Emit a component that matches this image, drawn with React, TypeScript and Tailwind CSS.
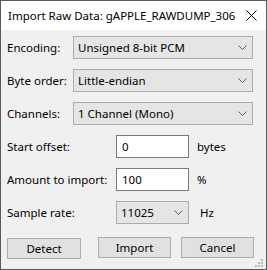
const font = { fontFamily: '"Noto Sans", "Liberation Sans", sans-serif' };

function Chevron() {
  return (
    <svg width="9" height="5" viewBox="0 0 9 5" className="shrink-0">
      <path d="M0.5 0.5 L4.5 4.5 L8.5 0.5" fill="none" stroke="#606060" strokeWidth="1" />
    </svg>
  );
}

function Combo({ value, width }: { value: string; width: string }) {
  return (
    <div
      className={`flex h-[23px] ${width} items-center justify-between border border-[#adadad] bg-[#e5e5e5] pl-[4px] pr-[5px] text-[11.5px] text-black`}
    >
      <span>{value}</span>
      <Chevron />
    </div>
  );
}

function TextBox({ value }: { value: string }) {
  return (
    <div className="flex h-[23px] w-[73px] items-center border border-[#7a7a7a] bg-white pl-[5px] text-[11.5px] text-black">
      {value}
    </div>
  );
}

function Button({ label, className = "" }: { label: string; className?: string }) {
  return (
    <button
      type="button"
      className={`flex h-[21px] items-center justify-center border border-[#adadad] bg-[#e1e1e1] text-[11.5px] text-black ${className}`}
    >
      {label}
    </button>
  );
}

export default function App() {
  return (
    <div
      className="relative flex h-[270px] w-[267px] flex-col border border-[#5a5a5a] bg-[#f0f0f0]"
      style={font}
    >
      {/* title bar */}
      <div className="flex h-[29px] items-center justify-between bg-white pl-[7px] pr-[9px] text-[11.5px] text-black">
        <span className="whitespace-nowrap">Import Raw Data: gAPPLE_RAWDUMP_306</span>
        <svg width="11" height="11" viewBox="0 0 11 11" className="shrink-0">
          <path d="M0.5 0.5 L10.5 10.5 M10.5 0.5 L0.5 10.5" stroke="#000" strokeWidth="1" />
        </svg>
      </div>

      <div className="flex flex-col gap-[10px] pl-[6px] pt-[6px] text-[11.5px] text-black">
        <div className="flex items-center">
          <span className="w-[66px]">Encoding:</span>
          <Combo value="Unsigned 8-bit PCM" width="w-[180px]" />
        </div>
        <div className="flex items-center">
          <span className="w-[66px]">Byte order:</span>
          <Combo value="Little-endian" width="w-[180px]" />
        </div>
        <div className="flex items-center">
          <span className="w-[66px]">Channels:</span>
          <Combo value="1 Channel (Mono)" width="w-[180px]" />
        </div>
        <div className="flex items-center">
          <span className="w-[109px]">Start offset:</span>
          <TextBox value="0" />
          <span className="ml-[8px]">bytes</span>
        </div>
        <div className="flex items-center">
          <span className="w-[109px]">Amount to import:</span>
          <TextBox value="100" />
          <span className="ml-[8px]">%</span>
        </div>
        <div className="flex items-center">
          <span className="w-[109px]">Sample rate:</span>
          <Combo value="11025" width="w-[73px]" />
          <span className="ml-[11px]">Hz</span>
        </div>
      </div>

      <div className="mt-[13px] flex items-start pl-[6px]">
        <Button label="Detect" className="mt-[1px] w-[74px]" />
        <Button label="Import" className="ml-[17px] w-[73px]" />
        <Button label="Cancel" className="ml-[10px] w-[73px]" />
      </div>

      {/* size grip */}
      <svg width="10" height="10" viewBox="0 0 10 10" className="absolute bottom-[1px] right-[2px]">
        <rect x="7" y="1" width="2" height="2" fill="#b8b8b8" />
        <rect x="4" y="4" width="2" height="2" fill="#b8b8b8" />
        <rect x="7" y="4" width="2" height="2" fill="#b8b8b8" />
        <rect x="1" y="7" width="2" height="2" fill="#b8b8b8" />
        <rect x="4" y="7" width="2" height="2" fill="#b8b8b8" />
        <rect x="7" y="7" width="2" height="2" fill="#b8b8b8" />
      </svg>
    </div>
  );
}
